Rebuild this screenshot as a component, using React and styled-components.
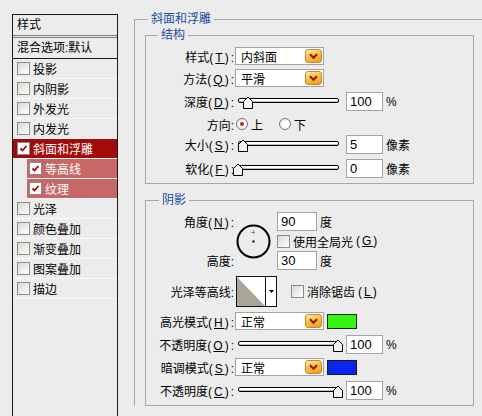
import React from 'react';
import styled, { createGlobalStyle } from 'styled-components';

const Global = createGlobalStyle`
  html, body {
    margin: 0;
    padding: 0;
    background: #ececec;
  }
  body {
    font-family: "Liberation Sans", "Noto Sans CJK SC", sans-serif;
    font-size: 12px;
    color: #000;
  }
`;

// 整体
const Page = styled.div`
  display: flex;
  align-items: flex-start;
  height: 416px;
  overflow: hidden;
`;

// 左侧样式列表
const Sidebar = styled.div`
  width: 106px;
  height: 410px;
  margin: 14px 0 0 12px;
  border: 1px solid #1a1a1a;
  box-sizing: border-box;
  display: flex;
  flex-direction: column;
  flex-shrink: 0;
`;

const SideHead = styled.div`
  height: 20px;
  line-height: 20px;
  padding-left: 4px;
  border-bottom: 3px double #7c7c7c;
`;

const SideBlend = styled.div`
  height: 20px;
  line-height: 20px;
  padding-left: 4px;
  border-bottom: 1px solid #1a1a1a;
`;

const SideItem = styled.div`
  height: 19px;
  display: flex;
  align-items: center;
  gap: 3px;
  padding-left: ${(p) => (p.$sub ? '2px' : '4px')};
  margin-left: ${(p) => (p.$sub ? '14px' : '0')};
  border-bottom: 1px solid #fafafa;
  background: ${(p) => (p.$sub ? '#c86767' : p.$active ? '#a30a0a' : 'transparent')};
  color: ${(p) => (p.$sub || p.$active ? '#fff' : '#000')};
`;

const Box = styled.span`
  width: 13px;
  height: 13px;
  box-sizing: border-box;
  border: 1px solid #8a8a8a;
  background: ${(p) =>
    p.$checked ? '#fff' : 'linear-gradient(135deg, #d9d9d2 0%, #f4f4f0 70%, #ffffff 100%)'};
  display: inline-flex;
  align-items: center;
  justify-content: center;
  flex-shrink: 0;
`;

function CheckBox({ checked }) {
  return (
    <Box $checked={checked}>
      {checked && (
        <svg width="9" height="9" viewBox="0 0 9 9">
          <path d="M1.5 4.5 L3.5 6.5 L7.5 2" fill="none" stroke="#a80000" strokeWidth="1.8" />
        </svg>
      )}
    </Box>
  );
}

// 右侧
const Main = styled.div`
  margin: 12px 0 0 16px;
`;

const Outer = styled.fieldset`
  margin: 0;
  width: 380px;
  padding: 2px 0 0 10px;
  border: 1px solid #a8a8a8;
  border-right: none;
  border-bottom: none;
  min-width: 0;
`;

const Legend = styled.legend`
  color: #1b4c9e;
  font-size: 12px;
  line-height: 14px;
  padding: 0 3px;
  margin-left: ${(p) => p.$ml || '2px'};
`;

const Group = styled.fieldset`
  margin: ${(p) => p.$mt || '0'} 0 0 0;
  width: 329px;
  box-sizing: border-box;
  padding: 5px 0 5px 0;
  border: 1px solid #a8a8a8;
  min-width: 0;
`;

const Row = styled.div`
  display: flex;
  align-items: center;
  height: ${(p) => p.$h}px;
  margin-top: ${(p) => p.$mt || 0}px;
`;

const Label = styled.span`
  width: 89px;
  flex-shrink: 0;
  text-align: right;
  padding-right: 1px;
  box-sizing: border-box;
  white-space: nowrap;
`;

const HotKey = styled.span`
  letter-spacing: 2px;
`;

const Hot = ({ k }) => (
  <HotKey>
    (<u>{k}</u>)
  </HotKey>
);

const SelectBox = styled.div`
  width: 89px;
  height: 18px;
  box-sizing: border-box;
  border: 1px solid #a3a3a3;
  background: #fff;
  display: flex;
  align-items: center;
  justify-content: space-between;
  padding-left: 5px;
  padding-right: 1px;
  flex-shrink: 0;
`;

const ArrowBtn = styled.span`
  width: 17px;
  height: 14px;
  box-sizing: border-box;
  border: 1px solid #c68a2a;
  border-radius: 3px;
  background: linear-gradient(160deg, #ffefb8 0%, #fbc24e 40%, #f39a1c 100%);
  display: flex;
  align-items: center;
  justify-content: center;
`;

function Select({ value }) {
  return (
    <SelectBox>
      <span>{value}</span>
      <ArrowBtn>
        <svg width="9" height="7" viewBox="0 0 9 7">
          <path d="M1 1.2 L4.5 4.8 L8 1.2" fill="none" stroke="#8a1a00" strokeWidth="2" />
        </svg>
      </ArrowBtn>
    </SelectBox>
  );
}

const Input = styled.div`
  width: ${(p) => p.$w || 37}px;
  height: 19px;
  box-sizing: border-box;
  border: 1px solid #a3a3a3;
  background: #fff;
  margin-left: ${(p) => p.$ml || 0}px;
  padding-left: 3px;
  font-size: 13px;
  line-height: 17px;
  flex-shrink: 0;
`;

const Unit = styled.span`
  margin-left: 3px;
`;

const SliderWrap = styled.div`
  position: relative;
  width: 101px;
  height: 14px;
  margin-left: 3px;
  flex-shrink: 0;
`;

const Track = styled.div`
  position: absolute;
  left: 0;
  right: 0;
  top: 3px;
  height: 5px;
  box-sizing: border-box;
  border: 1px solid #000;
  border-radius: 2px;
  background: #fff;
  box-shadow: inset 0 -1px 0 #bdbdbd;
`;

const Thumb = styled.svg`
  position: absolute;
  top: 1px;
`;

function Slider({ pct }) {
  return (
    <SliderWrap>
      <Track />
      <Thumb width="10" height="13" viewBox="0 0 10 13" style={{ left: pct * 100 - 5 }}>
        <path d="M0.5 12.5 V5.5 L5 1 L9.5 5.5 V12.5 Z" fill="#f2f2f2" stroke="#000" />
      </Thumb>
    </SliderWrap>
  );
}

const RadioDot = styled.span`
  width: 12px;
  height: 12px;
  box-sizing: border-box;
  border-radius: 50%;
  border: 1px solid #7a7a7a;
  background: radial-gradient(circle at 60% 60%, #ffffff 30%, #dcdcd6 100%);
  display: inline-flex;
  align-items: center;
  justify-content: center;
  margin-left: ${(p) => p.$ml || 0}px;
  margin-right: 3px;
  &::after {
    content: '';
    width: 4px;
    height: 4px;
    border-radius: 50%;
    background: ${(p) => (p.$on ? '#c42a1a' : 'transparent')};
  }
`;

const AngleGrid = styled.div`
  display: grid;
  grid-template-columns: 89px 42px auto;
  grid-template-rows: 19px 20px 19px;
  align-items: center;
`;

const Dial = styled.svg`
  grid-column: 2;
  grid-row: 1 / 4;
  margin-left: 1px;
`;

const Inline = styled.div`
  display: flex;
  align-items: center;
  gap: ${(p) => p.$gap || 0}px;
`;

const Contour = styled.div`
  width: 41px;
  height: 31px;
  box-sizing: border-box;
  border: 1px solid #111;
  display: flex;
  background: #fff;
  margin-left: 1px;
  flex-shrink: 0;
`;

const ContourDrop = styled.div`
  flex: 1;
  border-left: 1px solid #111;
  display: flex;
  align-items: center;
  justify-content: center;
`;

const Swatch = styled.span`
  width: 30px;
  height: 15px;
  box-sizing: border-box;
  border: 1px solid #1a1a1a;
  background: ${(p) => p.$color};
  margin-left: 3px;
`;

const sideItems = [
  { name: '投影' },
  { name: '内阴影' },
  { name: '外发光' },
  { name: '内发光' },
  { name: '斜面和浮雕', checked: true, active: true },
  { name: '等高线', checked: true, sub: true },
  { name: '纹理', checked: true, sub: true },
  { name: '光泽' },
  { name: '颜色叠加' },
  { name: '渐变叠加' },
  { name: '图案叠加' },
  { name: '描边' },
];

export default function App() {
  return (
    <>
      <Global />
      <Page>
        <Sidebar>
          <SideHead>样式</SideHead>
          <SideBlend>混合选项:默认</SideBlend>
          {sideItems.map((it) => (
            <SideItem key={it.name} $active={it.active} $sub={it.sub}>
              <CheckBox checked={it.checked} />
              {it.name}
            </SideItem>
          ))}
        </Sidebar>

        <Main>
          <Outer>
            <Legend $ml="3px">斜面和浮雕</Legend>
            <Group>
              <Legend $ml="12px">结构</Legend>
              <Row $h={18}>
                <Label>样式<Hot k="T" />:</Label>
                <Select value="内斜面" />
              </Row>
              <Row $h={18} $mt={4}>
                <Label>方法<Hot k="Q" />:</Label>
                <Select value="平滑" />
              </Row>
              <Row $h={19} $mt={5}>
                <Label>深度<Hot k="D" />:</Label>
                <Slider pct={0.1} />
                <Input $ml={7}>100</Input>
                <Unit>%</Unit>
              </Row>
              <Row $h={14} $mt={6}>
                <Label>方向:</Label>
                <RadioDot $on $ml={1} />上
                <RadioDot $ml={16} />下
              </Row>
              <Row $h={19} $mt={4}>
                <Label>大小<Hot k="S" />:</Label>
                <Slider pct={0.05} />
                <Input $ml={7}>5</Input>
                <Unit>像素</Unit>
              </Row>
              <Row $h={19} $mt={5}>
                <Label>软化<Hot k="F" />:</Label>
                <Slider pct={0} />
                <Input $ml={7}>0</Input>
                <Unit>像素</Unit>
              </Row>
            </Group>

            <Group $mt="9px">
              <Legend $ml="13px">阴影</Legend>
              <AngleGrid>
                <Label>角度<Hot k="N" />:</Label>
                <Dial width="35" height="35" viewBox="0 0 35 35">
                  <circle cx="17.5" cy="17.5" r="16" fill="none" stroke="#000" strokeWidth="2" />
                  <rect x="16.5" y="16.5" width="2" height="2" fill="#000" />
                  <path d="M15.5 8.5 h4 M17.5 6.5 v4" stroke="#444" strokeWidth="1" strokeDasharray="1 1" />
                </Dial>
                <Inline style={{ gridColumn: 3 }}>
                  <Input $w={40}>90</Input>
                  <Unit>度</Unit>
                </Inline>
                <Inline $gap={3} style={{ gridColumn: 3, gridRow: 2 }}>
                  <CheckBox />
                  使用全局光<Hot k="G" />
                </Inline>
                <Label style={{ gridColumn: 1, gridRow: 3 }}>高度:</Label>
                <Inline style={{ gridColumn: 3, gridRow: 3 }}>
                  <Input $w={40}>30</Input>
                  <Unit>度</Unit>
                </Inline>
              </AngleGrid>

              <Row $h={31} $mt={6}>
                <Label>光泽等高线:</Label>
                <Contour>
                  <svg width="28" height="29" viewBox="0 0 28 29">
                    <polygon points="0,0 28,29 0,29" fill="#a9a698" />
                  </svg>
                  <ContourDrop>
                    <svg width="5" height="3" viewBox="0 0 5 3">
                      <polygon points="0,0 5,0 2.5,3" fill="#000" />
                    </svg>
                  </ContourDrop>
                </Contour>
                <Inline $gap={3} style={{ marginLeft: 14 }}>
                  <CheckBox />
                  消除锯齿<Hot k="L" />
                </Inline>
              </Row>
              <Row $h={18} $mt={5}>
                <Label>高光模式<Hot k="H" />:</Label>
                <Select value="正常" />
                <Swatch $color="#33f50f" />
              </Row>
              <Row $h={19} $mt={5}>
                <Label>不透明度<Hot k="O" />:</Label>
                <Slider pct={1} />
                <Input $ml={7}>100</Input>
                <Unit>%</Unit>
              </Row>
              <Row $h={18} $mt={4}>
                <Label>暗调模式<Hot k="S" />:</Label>
                <Select value="正常" />
                <Swatch $color="#0a26ee" />
              </Row>
              <Row $h={19} $mt={5}>
                <Label>不透明度<Hot k="C" />:</Label>
                <Slider pct={1} />
                <Input $ml={7}>100</Input>
                <Unit>%</Unit>
              </Row>
            </Group>
          </Outer>
        </Main>
      </Page>
    </>
  );
}
